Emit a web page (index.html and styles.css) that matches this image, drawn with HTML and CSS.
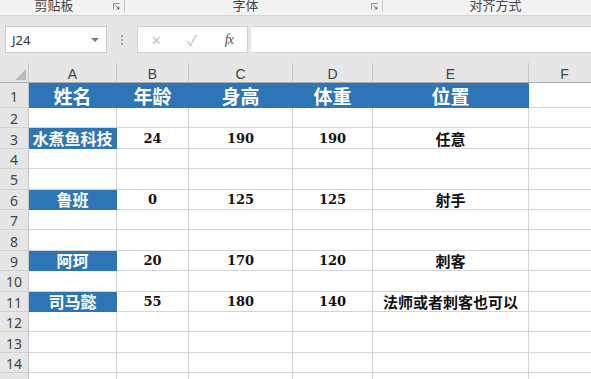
FILE: index.html
```html
<!DOCTYPE html>
<html>
<head>
  <meta name="viewport" content="width=device-width, initial-scale=1.0">
  <link rel="stylesheet" href="styles.css">
</head>
<body>

  <div id="app">

    <!-- ribbon group captions -->
    <div class="ribbon">
      <div class="group g-clip">
        <span class="group-label">剪贴板</span>
        <svg class="launcher" width="7" height="7" viewBox="0 0 7 7">
          <path d="M0.5 6.5V0.5H6.5" fill="none" stroke="#8a8a8a" stroke-width="1"/>
          <path d="M2.5 2.5L6 6M6 3.5V6H3.5" fill="none" stroke="#6a6a6a" stroke-width="1"/>
        </svg>
      </div>
      <div class="group g-font">
        <span class="group-label">字体</span>
        <svg class="launcher" width="7" height="7" viewBox="0 0 7 7">
          <path d="M0.5 6.5V0.5H6.5" fill="none" stroke="#8a8a8a" stroke-width="1"/>
          <path d="M2.5 2.5L6 6M6 3.5V6H3.5" fill="none" stroke="#6a6a6a" stroke-width="1"/>
        </svg>
      </div>
      <div class="group g-align">
        <span class="group-label">对齐方式</span>
      </div>
    </div>

    <!-- name box + formula bar -->
    <div class="formula-band">
      <div class="name-box">
        <span>J24</span>
        <span class="caret"></span>
      </div>
      <div class="grip"><i></i><i></i><i></i></div>
      <div class="fx-box">
        <span class="fx-btn cancel">✕</span>
        <span class="fx-btn ok">✓</span>
        <span class="fx-btn fx">fx</span>
      </div>
      <div class="formula-input"></div>
    </div>

    <!-- worksheet -->
    <div class="sheet">
      <div class="corner"><span class="tri"></span></div>
      <div class="col-head">A</div>
      <div class="col-head">B</div>
      <div class="col-head">C</div>
      <div class="col-head">D</div>
      <div class="col-head">E</div>
      <div class="col-head">F</div>

      <div class="row-head">1</div>
      <div class="cell blue title">姓名</div>
      <div class="cell blue title">年龄</div>
      <div class="cell blue title">身高</div>
      <div class="cell blue title">体重</div>
      <div class="cell blue title">位置</div>
      <div class="cell"></div>

      <div class="row-head">2</div>
      <div class="cell"></div><div class="cell"></div><div class="cell"></div><div class="cell"></div><div class="cell"></div><div class="cell"></div>

      <div class="row-head">3</div>
      <div class="cell blue name">水煮鱼科技</div>
      <div class="cell num">24</div>
      <div class="cell num">190</div>
      <div class="cell num">190</div>
      <div class="cell text">任意</div>
      <div class="cell"></div>

      <div class="row-head">4</div>
      <div class="cell"></div><div class="cell"></div><div class="cell"></div><div class="cell"></div><div class="cell"></div><div class="cell"></div>

      <div class="row-head">5</div>
      <div class="cell"></div><div class="cell"></div><div class="cell"></div><div class="cell"></div><div class="cell"></div><div class="cell"></div>

      <div class="row-head">6</div>
      <div class="cell blue name">鲁班</div>
      <div class="cell num">0</div>
      <div class="cell num">125</div>
      <div class="cell num">125</div>
      <div class="cell text">射手</div>
      <div class="cell"></div>

      <div class="row-head">7</div>
      <div class="cell"></div><div class="cell"></div><div class="cell"></div><div class="cell"></div><div class="cell"></div><div class="cell"></div>

      <div class="row-head">8</div>
      <div class="cell"></div><div class="cell"></div><div class="cell"></div><div class="cell"></div><div class="cell"></div><div class="cell"></div>

      <div class="row-head">9</div>
      <div class="cell blue name">阿珂</div>
      <div class="cell num">20</div>
      <div class="cell num">170</div>
      <div class="cell num">120</div>
      <div class="cell text">刺客</div>
      <div class="cell"></div>

      <div class="row-head">10</div>
      <div class="cell"></div><div class="cell"></div><div class="cell"></div><div class="cell"></div><div class="cell"></div><div class="cell"></div>

      <div class="row-head">11</div>
      <div class="cell blue name">司马懿</div>
      <div class="cell num">55</div>
      <div class="cell num">180</div>
      <div class="cell num">140</div>
      <div class="cell text">法师或者刺客也可以</div>
      <div class="cell"></div>

      <div class="row-head">12</div>
      <div class="cell"></div><div class="cell"></div><div class="cell"></div><div class="cell"></div><div class="cell"></div><div class="cell"></div>

      <div class="row-head">13</div>
      <div class="cell"></div><div class="cell"></div><div class="cell"></div><div class="cell"></div><div class="cell"></div><div class="cell"></div>

      <div class="row-head">14</div>
      <div class="cell"></div><div class="cell"></div><div class="cell"></div><div class="cell"></div><div class="cell"></div><div class="cell"></div>

      <div class="row-head">15</div>
      <div class="cell"></div><div class="cell"></div><div class="cell"></div><div class="cell"></div><div class="cell"></div><div class="cell"></div>
    </div>

  </div>

</body>
</html>
```

FILE: styles.css
```css
body {
  margin: 0;
  font-family: 'Noto Sans', 'Noto Sans CJK SC', sans-serif;
  background: #ffffff;
  overflow: hidden;
}

#app {
  width: 591px;
  height: 379px;
  overflow: hidden;
  display: flex;
  flex-direction: column;
}

/* Ribbon captions strip (cut off at the top) */
.ribbon {
  display: flex;
  height: 15px;
  flex-shrink: 0;
  background: #f3f3f3;
  border-bottom: 1px solid #d6d6d6;
  overflow: hidden;
}

.group {
  display: flex;
  align-items: flex-start;
  flex-shrink: 0;
  border-right: 1px solid #c8c8c8;
  height: 12px;
}

.g-clip { width: 124px; }
.g-font { width: 257px; }
.g-align { width: 228px; border-right: none; }

.group-label {
  flex: 1;
  text-align: center;
  font-family: 'Noto Sans CJK SC', sans-serif;
  font-size: 13px;
  line-height: 13px;
  margin-top: -2px;
  color: #444;
}

.g-clip .group-label { padding-right: 5px; }
.g-font .group-label { padding-right: 5px; }
.g-align .group-label { padding-right: 3px; }

.launcher {
  margin-top: 3px;
  margin-right: 4px;
}

/* Name box and formula bar */
.formula-band {
  display: flex;
  align-items: center;
  height: 47px;
  flex-shrink: 0;
  background: #e6e6e6;
  padding: 10px 0 10px 5px;
  box-sizing: border-box;
}

.formula-band > div {
  height: 27px;
  box-sizing: border-box;
}

.name-box {
  width: 102px;
  background: #fdfdfd;
  border: 1px solid #c9c9c9;
  display: flex;
  align-items: center;
  justify-content: space-between;
  padding: 0 7px 0 6px;
  font-size: 13px;
  color: #333;
}

.caret {
  width: 0;
  height: 0;
  border-left: 4px solid transparent;
  border-right: 4px solid transparent;
  border-top: 4px solid #777;
  margin-top: 1px;
}

.grip {
  width: 30px;
  display: flex;
  flex-direction: column;
  align-items: center;
  justify-content: center;
  gap: 2px;
}

.grip i {
  width: 2px;
  height: 2px;
  background: #a8a8a8;
}

.fx-box {
  width: 111px;
  background: #fdfdfd;
  border: 1px solid #d0d0d0;
  display: flex;
  align-items: center;
}

.fx-btn {
  width: 37px;
  text-align: center;
  font-size: 14px;
  color: #c2c2c2;
}

.fx-btn.cancel { font-size: 13px; }
.fx-btn.ok { font-size: 15px; }

.fx-btn.fx {
  font-family: 'Liberation Serif', serif;
  font-style: italic;
  font-size: 14px;
  color: #555;
  letter-spacing: -1px;
}

.formula-input {
  flex: 1;
  margin-left: 3px;
  background: #ffffff;
  border-top: 1px solid #d0d0d0;
  border-bottom: 1px solid #d0d0d0;
}

/* Worksheet grid */
.sheet {
  display: grid;
  grid-template-columns: 29px 88px 72px 104px 80px 156px 72px;
  grid-template-rows: 20px 25px repeat(14, 20.4px);
  flex-shrink: 0;
}

.sheet > div {
  box-sizing: border-box;
  border-right: 1px solid #d4d4d4;
  border-bottom: 1px solid #d4d4d4;
  display: flex;
  align-items: center;
  justify-content: center;
  overflow: hidden;
  white-space: nowrap;
}

.corner {
  background: #e6e6e6;
  position: relative;
  border-right-color: #c6c6c6 !important;
  border-bottom-color: #ababab !important;
}

.corner .tri {
  position: absolute;
  right: 2px;
  bottom: 2px;
  width: 0;
  height: 0;
  border-left: 11px solid transparent;
  border-bottom: 11px solid #b9b9b9;
}

.sheet > .col-head {
  background: #e6e6e6;
  border-right-color: #c6c6c6;
  border-bottom-color: #ababab;
  font-family: 'Liberation Sans', sans-serif;
  font-size: 14px;
  color: #444;
  padding-top: 3px;
}

.sheet > .row-head {
  background: #e6e6e6;
  border-right-color: #c6c6c6;
  border-bottom-color: #d0d0d0;
  font-family: 'Noto Sans', sans-serif;
  font-size: 14px;
  color: #444;
  padding-top: 2px;
}

.sheet > .blue {
  background: #2e75b6;
  border-color: #2e75b6;
  color: #ffffff;
}

.title {
  font-family: 'Noto Sans CJK SC', sans-serif;
  font-weight: 700;
  font-size: 19px;
}

.name {
  font-family: 'Noto Sans CJK SC', sans-serif;
  font-weight: 700;
  font-size: 16px;
}

.num {
  font-family: 'DejaVu Serif', serif;
  font-weight: 700;
  font-size: 13px;
  color: #111;
}

.text {
  font-family: 'Noto Sans CJK SC', sans-serif;
  font-weight: 700;
  font-size: 15px;
  color: #111;
}
```
